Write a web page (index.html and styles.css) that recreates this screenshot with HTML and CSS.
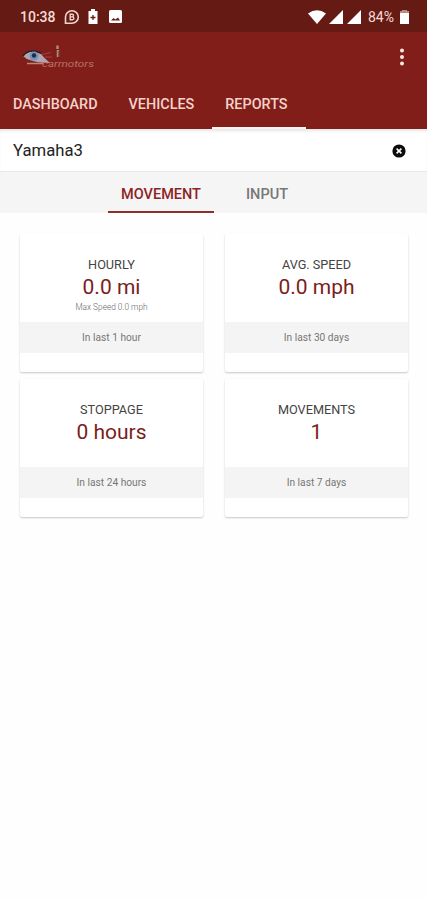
FILE: index.html
```html
<!DOCTYPE html>
<html lang="en">
<head>
  <meta charset="UTF-8">
  <meta name="viewport" content="width=device-width, initial-scale=1.0">
  <title>Reports</title>
  <link rel="stylesheet" href="styles.css">
</head>
<body>
<div class="status-bar">
  <span class="time">10:38</span>
  <svg class="icon-chat" width="16" height="16" viewBox="0 0 16 16">
    <path d="M1.500 14.200V8a6.400 6.200 0 1 1 6.400 6.200z" fill="none" stroke="#f3d3cc" stroke-width="1.600"/>
    <path d="M6.200 5.300h2a1.300 1.300 0 0 1 0 2.600h-2zM6.200 7.900h2.300a1.400 1.400 0 0 1 0 2.800H6.200z" fill="none" stroke="#f3d3cc" stroke-width="1.400"/>
  </svg>
  <svg class="icon-saver" width="10" height="15" viewBox="0 0 10 15">
    <path d="M3 0h4v2h2.500v13H.5V2H3z" fill="#fff"/>
    <path d="M5 6v5M2.500 8.500h5" stroke="#6a1a15" stroke-width="1.300"/>
  </svg>
  <svg class="icon-image" width="13" height="13" viewBox="0 0 13 13">
    <rect width="13" height="13" rx="1.500" fill="#fff"/>
    <path d="M2 10.500l2.500-2.500 2 1.500L9 7.500l2 3z" fill="#6a1a15"/>
  </svg>
  <div class="status-right">
    <svg class="icon-wifi" width="18" height="14" viewBox="0 0 18 14">
      <path d="M0 3.500Q9-3 18 3.500L9 14z" fill="#fff"/>
    </svg>
    <svg class="icon-signal" width="14" height="14" viewBox="0 0 14 14">
      <path d="M14 0v14H0z" fill="#fff"/>
    </svg>
    <svg class="icon-signal" width="14" height="14" viewBox="0 0 14 14">
      <path d="M14 0v14H0z" fill="#fff"/>
    </svg>
    <span class="percent">84%</span>
    <svg class="icon-battery" width="9" height="14" viewBox="0 0 9 14">
      <path d="M2.500 0h4v1.500H9V14H0V1.500h2.500z" fill="#fff"/>
      <path d="M2.500 0h4v1.500H9V3H0V1.500h2.500z" fill="#b98a80"/>
    </svg>
  </div>
</div>

<header class="app-bar">
  <div class="toolbar">
    <svg class="logo" width="76" height="28" viewBox="0 0 76 28">
      <path d="M1 13Q8 5 19 11Q22 15 28 20Q15 20 8 17Q4 16 1 13z" fill="#b3a5b0"/>
      <path d="M1 13Q7 5 19 10" fill="none" stroke="#2b2028" stroke-width="1.500"/>
      <circle cx="12" cy="13" r="4.500" fill="#7194ba"/>
      <circle cx="12" cy="12.500" r="2.200" fill="#1e2d49"/>
      <path d="M5 20.500h16" stroke="#b58a7c" stroke-width="1.500"/>
      <path d="M20 11.500l9-2M23 14h7" stroke="#9b4550"/>
      <path d="M35.500 2.500v3.500M36 7v7" stroke="#ae8b70" stroke-width="2.500"/>
      <path d="M37 8v6" stroke="#4b3232"/>
      <text x="20" y="24" textLength="52" lengthAdjust="spacingAndGlyphs">carmotors</text>
    </svg>
    <svg class="icon-more" width="6" height="18" viewBox="0 0 6 18">
      <circle cx="3" cy="2.500" r="2" fill="#fbe6e2"/>
      <circle cx="3" cy="9" r="2" fill="#fbe6e2"/>
      <circle cx="3" cy="15.500" r="2" fill="#fbe6e2"/>
    </svg>
  </div>
  <nav class="tabs">
    <a class="tab">DASHBOARD</a>
    <a class="tab">VEHICLES</a>
    <a class="tab active">REPORTS</a>
  </nav>
</header>

<div class="vehicle-row">
  <span class="vehicle-name">Yamaha3</span>
  <svg width="14" height="14" viewBox="0 0 14 14">
    <circle cx="7" cy="7" r="6.600" fill="#0c0c0c"/>
    <path d="M4.600 4.600l4.800 4.800M9.400 4.600L4.600 9.400" stroke="#fff" stroke-width="1.600"/>
  </svg>
</div>

<nav class="sub-tabs">
  <a class="sub-tab active">MOVEMENT</a>
  <a class="sub-tab">INPUT</a>
</nav>

<main class="cards">
  <section class="card">
    <div class="card-body">
      <h2>HOURLY</h2>
      <div class="value">0.0 mi</div>
      <div class="note">Max Speed 0.0 mph</div>
    </div>
    <div class="period">In last 1 hour</div>
  </section>
  <section class="card">
    <div class="card-body">
      <h2>AVG. SPEED</h2>
      <div class="value">0.0 mph</div>
    </div>
    <div class="period">In last 30 days</div>
  </section>
  <section class="card">
    <div class="card-body">
      <h2>STOPPAGE</h2>
      <div class="value">0 hours</div>
    </div>
    <div class="period">In last 24 hours</div>
  </section>
  <section class="card">
    <div class="card-body">
      <h2>MOVEMENTS</h2>
      <div class="value">1</div>
    </div>
    <div class="period">In last 7 days</div>
  </section>
</main>
</body>
</html>
```

FILE: styles.css
```css
* {
  box-sizing: border-box;
  margin: 0;
  padding: 0;
}

body {
  font-family: Roboto, sans-serif;
  background-color: #fefefe;
  min-height: 100vh;
}

svg {
  display: block;
  flex-shrink: 0;
}

.status-bar {
  display: flex;
  align-items: center;
  height: 32px;
  padding: 1px 18px 0 20px;
  background-color: #651a14;
  color: #f6dcd6;
  font-size: 14px;
}

.time {
  width: 44px;
  font-weight: 500;
}

.icon-saver {
  margin-left: 8px;
}

.icon-image {
  margin-left: 11px;
}

.status-right {
  display: flex;
  align-items: center;
  margin-left: auto;
}

.icon-signal {
  margin-left: 4px;
}

.icon-wifi + .icon-signal {
  margin-left: 3px;
}

.percent {
  width: 28px;
  margin: 0 4px 0 7px;
}

.app-bar {
  height: 97px;
  background-color: #821e19;
}

.toolbar {
  display: flex;
  justify-content: space-between;
  align-items: center;
  height: 50px;
  padding: 0 22px;
}

.logo text {
  font-size: 9px;
  font-style: italic;
  fill: #b87068;
}

.tabs {
  display: flex;
  height: 47px;
}

.tab {
  padding: 0 18px 0 13px;
  color: #f5d3cb;
  font-size: 14.4px;
  font-weight: 500;
  line-height: 45px;
  border-bottom: 2px solid transparent;
}

.tab.active {
  border-bottom-color: #fbf3f1;
}

.vehicle-row {
  display: flex;
  justify-content: space-between;
  align-items: center;
  height: 42px;
  padding: 1px 21px 0 13px;
  background-color: #fff;
  box-shadow: inset 0 3px 3px -1px rgba(0, 0, 0, 0.1);
}

.vehicle-name {
  font-size: 16.7px;
  line-height: 22px;
  padding-top: 1px;
  color: #222;
}

.sub-tabs {
  display: flex;
  height: 42px;
  padding-left: 108px;
  background-color: #f5f5f5;
  border-top: 1px solid #e9e9e9;
}

.sub-tab {
  width: 106px;
  color: #777;
  font-size: 14.5px;
  font-weight: 500;
  line-height: 45px;
  text-align: center;
}

.sub-tab.active {
  color: #8d2424;
  border-bottom: 2px solid #8d2e2b;
}

.cards {
  display: grid;
  grid-template-columns: 183px 183px;
  gap: 7px 22px;
  padding: 21px 20px 20px;
}

.card {
  height: 138px;
  background-color: #fff;
  border-radius: 2px;
  box-shadow: 0 1px 2px rgba(0, 0, 0, 0.22);
  text-align: center;
}

.card-body {
  height: 88px;
  padding-top: 22px;
}

.card h2 {
  font-size: 12.7px;
  font-weight: 400;
  line-height: 17px;
  color: #444;
}

.value {
  font-size: 21px;
  line-height: 29px;
  color: #7b1d20;
}

.note {
  font-size: 8.3px;
  font-weight: 300;
  line-height: 10px;
  color: #666;
}

.period {
  height: 31px;
  background-color: #f4f4f4;
  color: #777;
  font-size: 10.2px;
  line-height: 32px;
}
```
